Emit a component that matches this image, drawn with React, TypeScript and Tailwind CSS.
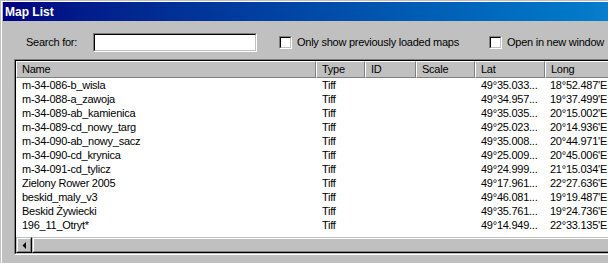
import React from 'react';

type MapRow = {
  name: string;
  type: string;
  lat: string;
  long: string;
};

const rows: MapRow[] = [
  { name: 'm-34-086-b_wisla', type: 'Tiff', lat: '49°35.033...', long: "18°52.487'E" },
  { name: 'm-34-088-a_zawoja', type: 'Tiff', lat: '49°34.957...', long: "19°37.499'E" },
  { name: 'm-34-089-ab_kamienica', type: 'Tiff', lat: '49°35.035...', long: "20°15.002'E" },
  { name: 'm-34-089-cd_nowy_targ', type: 'Tiff', lat: '49°25.023...', long: "20°14.936'E" },
  { name: 'm-34-090-ab_nowy_sacz', type: 'Tiff', lat: '49°35.008...', long: "20°44.971'E" },
  { name: 'm-34-090-cd_krynica', type: 'Tiff', lat: '49°25.009...', long: "20°45.006'E" },
  { name: 'm-34-091-cd_tylicz', type: 'Tiff', lat: '49°24.999...', long: "21°15.034'E" },
  { name: 'Zielony Rower 2005', type: 'Tiff', lat: '49°17.961...', long: "22°27.636'E" },
  { name: 'beskid_maly_v3', type: 'Tiff', lat: '49°46.081...', long: "19°19.487'E" },
  { name: 'Beskid Żywiecki', type: 'Tiff', lat: '49°35.761...', long: "19°24.736'E" },
  { name: '196_11_Otryt*', type: 'Tiff', lat: '49°14.949...', long: "22°33.135'E" },
];

const columns = [
  { label: 'Name', width: 'w-[300px]' },
  { label: 'Type', width: 'w-[49px]' },
  { label: 'ID', width: 'w-[51px]' },
  { label: 'Scale', width: 'w-[59px]' },
  { label: 'Lat', width: 'w-[70px]' },
  { label: 'Long', width: 'w-[110px]' },
];

// classic sunken 2px frame
const Sunken: React.FC<{ className?: string; innerClassName?: string; children?: React.ReactNode }> = ({
  className = '',
  innerClassName = '',
  children,
}) => (
  <div className={`border border-t-[#808080] border-l-[#808080] border-b-white border-r-white ${className}`}>
    <div className={`h-full border border-t-black border-l-black border-b-[#c0c0c0] border-r-[#c0c0c0] bg-white ${innerClassName}`}>
      {children}
    </div>
  </div>
);

const Checkbox: React.FC<{ label: string; className?: string }> = ({ label, className = '' }) => (
  <div className={`flex items-center ${className}`}>
    <Sunken className="w-[13px] h-[13px] shrink-0" />
    <span className="ml-[5px]">{label}</span>
  </div>
);

const Raised: React.FC<{ className?: string; children?: React.ReactNode }> = ({ className = '', children }) => (
  <div className={`border border-t-[#c0c0c0] border-l-[#c0c0c0] border-b-black border-r-black ${className}`}>
    <div className="h-full border border-t-white border-l-white border-b-[#808080] border-r-[#808080] bg-[#c0c0c0] flex items-center justify-center">
      {children}
    </div>
  </div>
);

export default function App() {
  return (
    <div
      className="w-[608px] h-[263px] overflow-hidden bg-[#c0c0c0] pt-px pl-px text-[11px] tracking-[-0.25px] text-black leading-none"
      style={{ fontFamily: '"Liberation Sans", Arial, sans-serif' }}
    >
      <div className="h-full border-t border-l border-white pl-px">
        {/* title bar */}
        <div className="h-[19px] w-[640px] bg-gradient-to-r from-[#000080] to-[#1084d0] flex items-center pl-[2px]">
          <span className="text-white font-bold text-[12px] tracking-normal">Map List</span>
        </div>

        {/* search row */}
        <div className="mt-[12px] h-[19px] flex items-center whitespace-nowrap">
          <span className="ml-[23px] w-[67px]">Search for:</span>
          <Sunken className="w-[164px] h-[19px]" />
          <Checkbox label="Only show previously loaded maps" className="ml-[22px] w-[210px]" />
          <Checkbox label="Open in new window" />
        </div>

        {/* list view */}
        <Sunken className="ml-[11px] mt-[7px] w-[640px] h-[196px]" innerClassName="flex flex-col">
          <div className="flex h-[17px] shrink-0">
            {columns.map((col) => (
              <div
                key={col.label}
                className={`${col.width} shrink-0 bg-[#c0c0c0] border border-t-white border-l-white border-b-[#808080] border-r-[#808080] flex items-center pl-[5px]`}
              >
                {col.label}
              </div>
            ))}
          </div>

          <div className="flex-1 whitespace-nowrap">
            {rows.map((r) => (
              <div key={r.name} className="flex h-[14px] items-center">
                <div className="w-[300px] shrink-0 pl-[6px]">{r.name}</div>
                <div className="w-[49px] shrink-0 pl-[6px]">{r.type}</div>
                <div className="w-[51px] shrink-0" />
                <div className="w-[59px] shrink-0" />
                <div className="w-[70px] shrink-0 pl-[6px]">{r.lat}</div>
                <div className="w-[110px] shrink-0 pl-[5px]">{r.long}</div>
              </div>
            ))}
          </div>

          {/* horizontal scrollbar */}
          <div className="flex h-[16px] shrink-0 bg-[#dcdcdc]">
            <Raised className="w-[16px] h-[16px] shrink-0">
              <svg width="4" height="7" viewBox="0 0 4 7">
                <path d="M4 0 L4 7 L0.5 3.5 Z" fill="black" />
              </svg>
            </Raised>
            <Raised className="flex-1 h-[16px]" />
          </div>
        </Sunken>
      </div>
    </div>
  );
}
